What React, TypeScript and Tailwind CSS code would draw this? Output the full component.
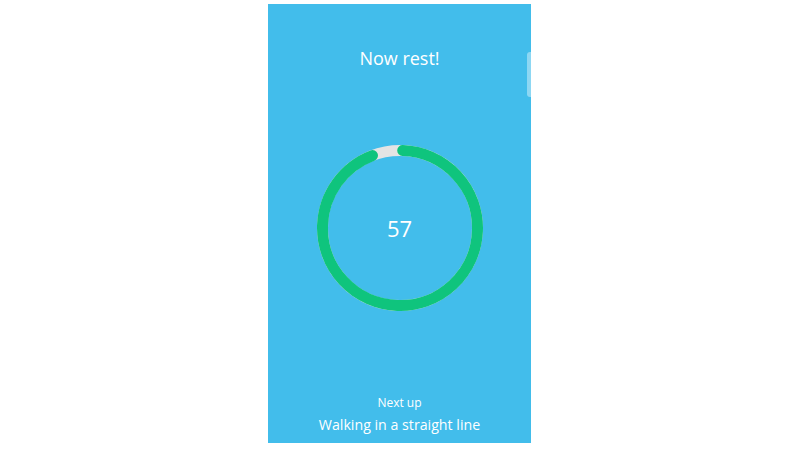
import React from "react";

const C = 2 * Math.PI * 77.5;

export default function App() {
  return (
    <div className="w-[800px] h-[449px] bg-white overflow-hidden" style={{ fontFamily: '"Open Sans", "Noto Sans", sans-serif' }}>
      <div className="relative ml-[268px] mt-[4px] w-[263px] h-[439px] bg-[#42bdeb] flex flex-col items-center text-white">
        <div className="mt-[40px] h-[28px] leading-[28px] text-[18px]">Now rest!</div>
        <div className="relative mt-[73px] w-[166px] h-[166px] flex items-center justify-center">
          <svg width="166" height="166" viewBox="0 0 166 166" className="absolute inset-0">
            <circle cx="83" cy="83" r="77.5" fill="none" stroke="#e4e4e4" strokeWidth="11" />
            <circle
              cx="83"
              cy="83"
              r="77.5"
              fill="none"
              stroke="#0fc47d"
              strokeWidth="11"
              strokeLinecap="round"
              strokeDasharray={`${C * 0.935} ${C}`}
              transform="rotate(-88 83 83)"
            />
          </svg>
          <span className="relative text-[22px] leading-none">57</span>
        </div>
        <div className="mt-[83px] h-[18px] leading-[18px] text-[12px]">Next up</div>
        <div className="mt-[2px] h-[22px] leading-[22px] text-[14.2px]">Walking in a straight line</div>
        <div className="absolute right-0 top-[48px] w-[4px] h-[45px] rounded-l-[3px] bg-white/40" />
      </div>
    </div>
  );
}
